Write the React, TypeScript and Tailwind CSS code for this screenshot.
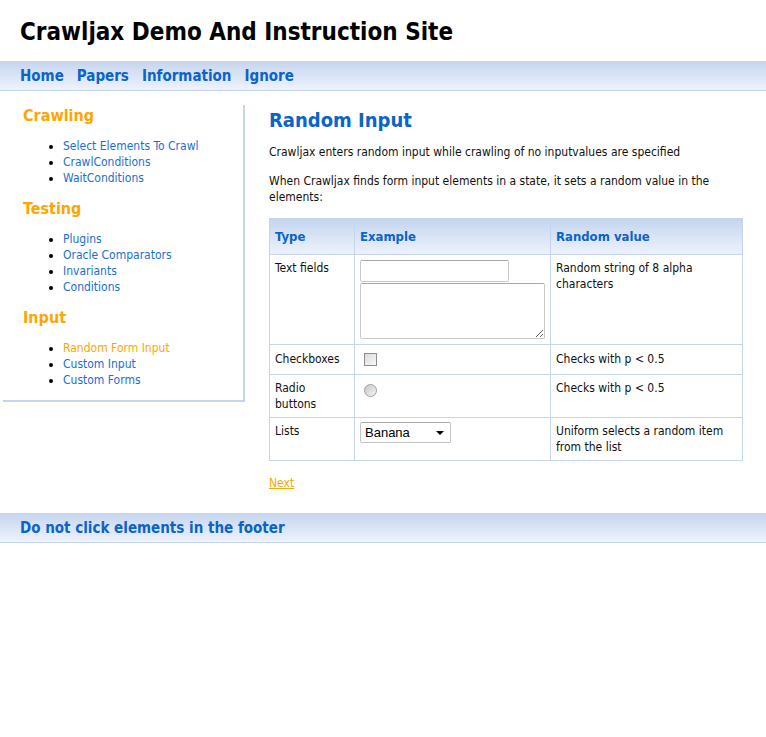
import React from 'react';

const navLinks = ['Home', 'Papers', 'Information', 'Ignore'];

const sections = [
  { title: 'Crawling', items: ['Select Elements To Crawl', 'CrawlConditions', 'WaitConditions'] },
  { title: 'Testing', items: ['Plugins', 'Oracle Comparators', 'Invariants', 'Conditions'] },
  { title: 'Input', items: ['Random Form Input', 'Custom Input', 'Custom Forms'] },
];

const barBg = 'bg-gradient-to-b from-[#c5d5ee] to-[#eef3fc] border-b border-[#c5d5ee]';
const td = 'border border-[#c5d5ee] align-top px-[5px]';
const th = 'border border-[#c5d5ee] text-left px-[5px] pt-[10px] pb-[9px] text-[13px] leading-[16px] font-bold text-[#0a64c9]';

export default function App() {
  return (
    <div className="min-h-[737px] bg-white text-[#111] font-['DejaVu_Sans_Condensed','DejaVu_Sans',sans-serif] [font-stretch:condensed]">
      {/* header */}
      <div className="h-[61px] px-5 pt-[17px]">
        <h1 className="text-[24px] leading-[30px] font-bold text-black">Crawljax Demo And Instruction Site</h1>
      </div>

      {/* top nav */}
      <div className={`h-[30px] flex items-center gap-[13px] px-5 pt-[2px] ${barBg}`}>
        {navLinks.map(l => (
          <a key={l} className="text-[15px] font-bold text-[#0a64c9] cursor-pointer">{l}</a>
        ))}
      </div>

      <div className="flex items-start">
        {/* sidebar */}
        <div className="ml-[3px] mt-[14px] w-[242px] border-r-2 border-b-2 border-[#c5d5ee] pl-5 pb-[12px] flex flex-col gap-[12px]">
          {sections.map(s => (
            <div key={s.title}>
              <h3 className="text-[16px] leading-[20px] pt-[1px] font-bold text-[#ffa500] mb-[12px]">{s.title}</h3>
              <ul className="list-disc pl-10 text-[12px] leading-[16px] text-black">
                {s.items.map(i => (
                  <li key={i}>
                    <span className={`cursor-pointer ${i === 'Random Form Input' ? 'text-[#ffa500]' : 'text-[#1a6ed8]'}`}>{i}</span>
                  </li>
                ))}
              </ul>
            </div>
          ))}
        </div>

        {/* main content */}
        <div className="ml-[24px] mt-[17px] w-[474px] text-[12px] leading-[16px]">
          <h2 className="text-[20px] leading-[24px] font-bold text-[#0a64c9] mb-[12px]">Random Input</h2>
          <p className="mb-[13px]">Crawljax enters random input while crawling of no inputvalues are specified</p>
          <p className="mb-[13px]">When Crawljax finds form input elements in a state, it sets a random value in the elements:</p>

          <table className="w-[474px] border-collapse table-fixed">
            <colgroup>
              <col className="w-[85px]" />
              <col className="w-[196px]" />
              <col className="w-[192px]" />
            </colgroup>
            <thead>
              <tr className="bg-gradient-to-b from-[#c5d5ee] to-[#eef3fc]">
                <th className={th}>Type</th>
                <th className={th}>Example</th>
                <th className={th}>Random value</th>
              </tr>
            </thead>
            <tbody>
              <tr>
                <td className={`${td} pt-[5px] pb-[5px]`}>Text fields</td>
                <td className={`${td} pt-[5px] pb-[5px]`}>
                  <input type="text" className="block w-[149px] h-[22px] border border-[#c8c8c8] border-t-[#a8a8a8] rounded-[2px] bg-white" />
                  <textarea className="block mt-[1px] w-[185px] h-[56px] border border-[#c8c8c8] border-t-[#a8a8a8] rounded-[2px] bg-white resize" />
                </td>
                <td className={`${td} pt-[5px] pb-[5px]`}>Random string of 8 alpha characters</td>
              </tr>
              <tr>
                <td className={`${td} pt-[6px] pb-[7px]`}>Checkboxes</td>
                <td className={`${td} pt-[6px] pb-[7px]`}>
                  <span className="block ml-[4px] mt-[2px] w-[13px] h-[13px] border border-[#8e8e8e] bg-gradient-to-br from-[#dcdcdc] to-[#f8f8f8]" />
                </td>
                <td className={`${td} pt-[6px] pb-[7px]`}>Checks with p &lt; 0.5</td>
              </tr>
              <tr>
                <td className={`${td} pt-[5px] pb-[5px]`}>Radio buttons</td>
                <td className={`${td} pt-[5px] pb-[5px]`}>
                  <span className="block ml-[4px] mt-[4px] w-[13px] h-[13px] rounded-full border border-[#a0a0a0] bg-gradient-to-br from-[#c8c8c8] to-[#f4f4f4]" />
                </td>
                <td className={`${td} pt-[5px] pb-[5px]`}>Checks with p &lt; 0.5</td>
              </tr>
              <tr>
                <td className={`${td} pt-[5px] pb-[5px]`}>Lists</td>
                <td className={`${td} pt-[4px] pb-[5px]`}>
                  <div className="w-[91px] h-[21px] border border-[#c4c4c4] border-t-[#a8a8a8] rounded-[2px] flex items-center justify-between pl-[4px] pr-[6px] font-['Liberation_Sans',sans-serif] text-[13px] text-black">
                    <span>Banana</span>
                    <svg width="8" height="4" viewBox="0 0 8 4"><path d="M0 0h8L4 4z" fill="#000" /></svg>
                  </div>
                </td>
                <td className={`${td} pt-[5px] pb-[5px]`}>Uniform selects a random item from the list</td>
              </tr>
            </tbody>
          </table>

          <a className="inline-block mt-[14px] text-[#ffa500] underline cursor-pointer">Next</a>
        </div>
      </div>

      {/* footer */}
      <div className={`mt-[22px] h-[30px] flex items-center px-5 pt-[1px] ${barBg}`}>
        <span className="text-[15px] font-bold text-[#0a64c9]">Do not click elements in the footer</span>
      </div>
    </div>
  );
}
